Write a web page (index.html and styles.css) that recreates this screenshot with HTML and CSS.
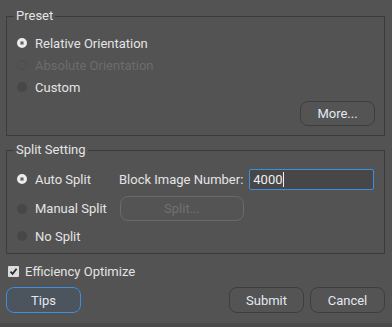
FILE: index.html
```html
<!DOCTYPE html>
<html>
<head>
<meta charset="utf-8">
<link rel="stylesheet" href="styles.css">
</head>
<body>
<div class="dialog">
  <fieldset class="group preset">
    <legend>Preset</legend>
    <div class="rows">
      <div class="opt"><span class="radio on"></span><span>Relative Orientation</span></div>
      <div class="opt disabled"><span class="radio off"></span><span>Absolute Orientation</span></div>
      <div class="opt"><span class="radio"></span><span>Custom</span></div>
    </div>
    <div class="btnrow"><button class="btn more">More...</button></div>
  </fieldset>

  <fieldset class="group split">
    <legend>Split Setting</legend>
    <div class="srows">
      <div class="srow s1">
        <div class="opt cell"><span class="radio on"></span><span>Auto Split</span></div>
        <div class="blk"><span class="lbl">Block Image Number:</span><div class="input">4000<span class="caret"></span></div></div>
      </div>
      <div class="srow s2">
        <div class="opt cell"><span class="radio"></span><span>Manual Split</span></div>
        <button class="btn splitbtn" disabled>Split...</button>
      </div>
      <div class="srow s3">
        <div class="opt cell"><span class="radio"></span><span>No Split</span></div>
      </div>
    </div>
  </fieldset>

  <div class="check"><span class="box"><svg width="11" height="11" viewBox="0 0 11 11"><path d="M2.5 5.6 L4.6 7.8 L8.6 2.8" fill="none" stroke="#2a2a2a" stroke-width="1.8"/></svg></span><span>Efficiency Optimize</span></div>

  <div class="footer">
    <button class="btn tips">Tips</button>
    <div class="right">
      <button class="btn">Submit</button>
      <button class="btn">Cancel</button>
    </div>
  </div>
</div>
<div class="bottomstrip"></div>
</body>
</html>
```
FILE: styles.css
```css
html, body {
  margin: 0;
  padding: 0;
  background: #535353;
  width: 392px;
  height: 327px;
  overflow: hidden;
}
body {
  font-family: Roboto, "Noto Sans", sans-serif;
  font-size: 13px;
  color: #e4e4e4;
  position: relative;
  white-space: nowrap;
}
.dialog {
  padding: 8px 7px 0 6px;
}
.group {
  margin: 0;
  border: 1px solid #3b3b3b;
  padding: 0 9px 0 10px;
  min-width: 0;
}
.group legend {
  padding: 0 2px;
  margin-left: -3px;
  height: 16px;
  line-height: 16px;
  color: #e4e4e4;
}
.preset {
  padding-bottom: 9px;
}
.rows {
  padding-top: 8px;
}
.opt {
  display: flex;
  align-items: center;
  height: 22px;
  gap: 8px;
}
.opt.disabled {
  color: #6c6c6c;
}
.radio {
  width: 10px;
  height: 10px;
  border-radius: 50%;
  background: #474747;
  box-sizing: border-box;
  flex: none;
}
.radio.on {
  background: #555;
  border: 3px solid #ececec;
  box-shadow: 0 0 0 1px #9a9a9a inset;
}
.radio.off {
  background: transparent;
  border: 1px solid #4d4d4d;
}
.btnrow {
  display: flex;
  justify-content: flex-end;
  margin-top: 3px;
}
.btn {
  font-family: Roboto, "Noto Sans", sans-serif;
  font-size: 13px;
  color: #e2e8f0;
  background: #545454;
  border: 1px solid #3e3e3e;
  border-radius: 8px;
  height: 26px;
  width: 75px;
  padding: 0;
  flex: none;
}
.more {
  height: 25px;
}
.split {
  margin-top: 6px;
  padding-bottom: 6px;
}
.srows {
  padding-top: 10px;
  display: flex;
  flex-direction: column;
}
.srow {
  display: flex;
  align-items: center;
}
.s1 { height: 22px; }
.s2 { height: 25px; margin-top: 6px; }
.s3 { height: 22px; margin-top: 4px; }
.cell {
  width: 102px;
  flex: none;
}
.blk {
  display: flex;
  align-items: center;
  gap: 6px;
  flex: none;
}
.lbl {
  flex: none;
}
.input {
  flex: none;
  width: 120px;
  height: 19px;
  border: 1px solid #3b8ee2;
  border-radius: 2px;
  background: #474747;
  color: #f0f0f0;
  line-height: 19px;
  padding-left: 3px;
  display: flex;
  align-items: center;
}
.caret {
  display: inline-block;
  width: 1px;
  height: 15px;
  background: #f0f0f0;
}
.splitbtn {
  width: 124px;
  height: 25px;
  margin-left: 1px;
  color: #717171;
  border-color: #6a6a6a;
}
.check {
  display: flex;
  align-items: center;
  height: 18px;
  margin-top: 8px;
  margin-left: 2px;
  gap: 6px;
}
.box {
  width: 11px;
  height: 11px;
  background: #dcdcdc;
  border-radius: 1px;
  display: flex;
}
.footer {
  display: flex;
  justify-content: space-between;
  margin-top: 7px;
}
.right {
  display: flex;
  gap: 6px;
}
.tips {
  background: #4c545d;
  border-color: #3b8ee2;
}
.bottomstrip {
  position: absolute;
  left: 0;
  right: 0;
  bottom: 0;
  height: 4px;
  background: #4a4a4a;
}
```
